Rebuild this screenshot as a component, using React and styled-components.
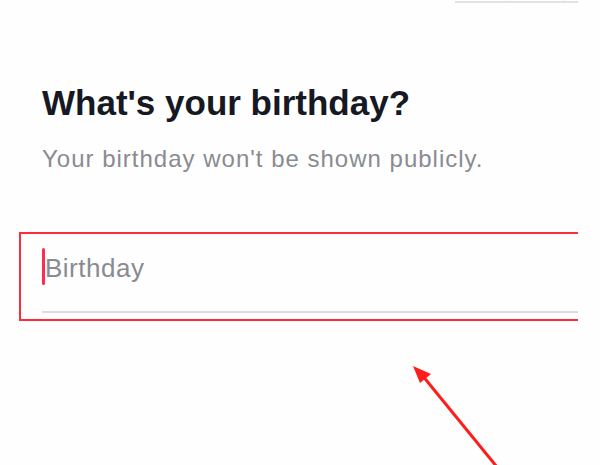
import React from 'react';
import styled, { createGlobalStyle } from 'styled-components';

const GlobalStyle = createGlobalStyle`
  body {
    margin: 0;
    background: #fefefe;
    font-family: 'Liberation Sans', Arial, sans-serif;
  }
`;

const Page = styled.div`
  position: relative;
  width: 600px;
  height: 465px;
  overflow: hidden;
`;

const Frame = styled.div`
  width: 578px;
  height: 100%;
  overflow: hidden;
  display: flex;
  flex-direction: column;
`;

const TopBar = styled.div`
  display: flex;
  justify-content: flex-end;
  height: 3px;
`;

const Tabs = styled.div`
  display: flex;
  width: 123px;
  border-bottom: 2px solid #dfe4e3;
`;

const Tab = styled.div`
  flex: ${(p) => p.grow};
  border-right: 1px solid #eef0ef;
`;

const Content = styled.div`
  padding: 80px 0 0 42px;
  display: flex;
  flex-direction: column;
`;

const Title = styled.h1`
  margin: 0;
  color: #161823;
  font-size: 35px;
  font-weight: 700;
  line-height: 40px;
`;

const Subtitle = styled.p`
  margin: 22px 0 0;
  color: #8a8b91;
  font-size: 24px;
  line-height: 28px;
  letter-spacing: 1px;
`;

const Highlight = styled.div`
  margin: 59px 0 0 -23px;
  width: 600px;
  height: 89px;
  box-sizing: border-box;
  border: 2px solid #ff2b3b;
  padding-left: 21px;
`;

const Field = styled.div`
  display: flex;
  align-items: flex-start;
  height: 79px;
  padding-top: 14px;
  box-sizing: border-box;
  border-bottom: 2px solid #dcdcdc;
  width: 536px;
`;

const Caret = styled.span`
  width: 3px;
  height: 37px;
  border-radius: 2px;
  background: #fe2c55;
`;

const Placeholder = styled.span`
  color: #8a8b91;
  font-size: 26px;
  line-height: 37px;
  letter-spacing: 0.5px;
  margin-top: 2px;
`;

const Arrow = styled.svg`
  position: absolute;
  left: 400px;
  top: 355px;
`;

export default function App() {
  return (
    <>
      <GlobalStyle />
      <Page>
        <Frame>
          <TopBar>
            <Tabs>
              <Tab grow={55} />
              <Tab grow={56} />
              <Tab grow={12} />
            </Tabs>
          </TopBar>
          <Content>
            <Title>What's your birthday?</Title>
            <Subtitle>Your birthday won't be shown publicly.</Subtitle>
            <Highlight>
              <Field>
                <Caret />
                <Placeholder>Birthday</Placeholder>
              </Field>
            </Highlight>
          </Content>
        </Frame>
        <Arrow width="110" height="115" viewBox="0 0 110 115">
          <line x1="97" y1="112" x2="22" y2="20" stroke="#ff1c1c" strokeWidth="3" />
          <polygon points="13,11 31,19 20,28" fill="#ff1c1c" />
        </Arrow>
      </Page>
    </>
  );
}
